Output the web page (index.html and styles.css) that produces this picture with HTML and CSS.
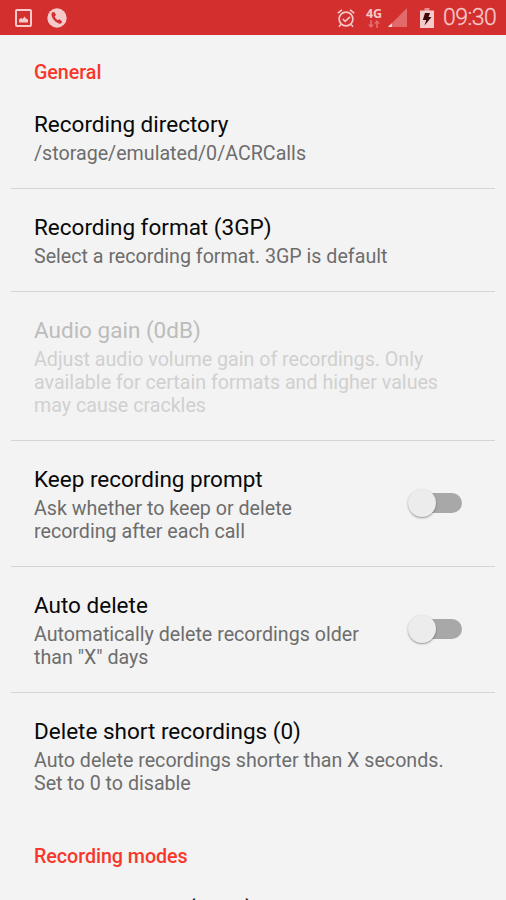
FILE: index.html
```html
<!DOCTYPE html>
<html lang="en"><head><meta charset="utf-8"><title>Settings</title><link rel="stylesheet" href="styles.css"></head>
<body>
<header class="status">
<svg class="ico image" width="17" height="18" viewBox="0 0 17 18"><rect x="1" y="1" width="15" height="16" rx="1" fill="none" stroke="currentColor" stroke-width="2"/><path d="M4 13.500V10.500l2-1.500 1.500 1 2-2.500 1.500 2 2 1v3z" fill="currentColor"/></svg>
<svg class="ico call" width="20" height="20" viewBox="0 0 20 20"><circle cx="10" cy="10" r="9.700" fill="currentColor"/><path d="M5.500 4.300L7.300 4l1.700 3.100-1.400 1.300q1 2.500 3.200 3.900l1.600-1 2.700 2.200-.700 1.700q-1 .8-2.500.3C8 14 5 10.500 4.400 6.500q0-1.500 1.100-2.200z" fill="#d32f2f"/></svg>
<span class="space"></span>
<svg class="ico alarm" width="18" height="20" viewBox="0 0 18 20"><circle cx="9" cy="11" r="6.900" fill="none" stroke="currentColor" stroke-width="1.700"/><path d="M.8 5.200L5 1.800M17.200 5.200L13 1.800M3.800 16.500L2 18.700M14.200 16.500l1.800 2.200M5.800 11l2.400 2.400L13 8.800" fill="none" stroke="currentColor" stroke-width="1.600"/></svg>
<div class="network"><b>4G</b><svg width="12" height="8" viewBox="0 0 12 8"><path d="M2.200 0h1.600v4.500H6L3 8 0 4.500h2.200zM8.200 8h1.600V3.500H12L9 0 6 3.500h2.200z" fill="#e27070"/></svg></div>
<svg class="ico signal" width="19" height="19" viewBox="0 0 19 19"><path d="M19 0v19H0z" fill="#e16b6b"/><path d="M3.800 15.200V19H0z" fill="#fbe6e6"/></svg>
<svg class="ico battery" width="14" height="20" viewBox="0 0 14 20"><path d="M4.500 0h5v3h-5z" fill="#e58c8c"/><path d="M0 2.500h14V20H0z" fill="currentColor"/><path d="M5 5h5L8.500 9H11.500L4.500 17.500 6.200 12H2.800z" fill="#3a0808"/></svg>
<time>09:30</time>
</header>
<main>
<h2>General</h2>
<section class="first"><div class="copy"><h3>Recording directory</h3><p>/storage/emulated/0/ACRCalls</p></div></section>
<section><div class="copy"><h3>Recording format (3GP)</h3><p>Select a recording format. 3GP is default</p></div></section>
<section class="disabled"><div class="copy"><h3>Audio gain (0dB)</h3><p>Adjust audio volume gain of recordings. Only<br>available for certain formats and higher values<br>may cause crackles</p></div></section>
<section><div class="copy"><h3>Keep recording prompt</h3><p>Ask whether to keep or delete<br>recording after each call</p></div><div class="switch"></div></section>
<section><div class="copy"><h3>Auto delete</h3><p>Automatically delete recordings older<br>than "X" days</p></div><div class="switch"></div></section>
<section class="last"><div class="copy"><h3>Delete short recordings (0)</h3><p>Auto delete recordings shorter than X seconds.<br>Set to 0 to disable</p></div></section>
<h2 class="modes">Recording modes</h2>
<section class="first last"><div class="copy"><h3>Save recording (none)</h3></div></section>
</main>
</body></html>
```
FILE: styles.css
```css
* { box-sizing: border-box; }
html, body { height: 100%; overflow: hidden; }
body { display: flex; flex-direction: column; margin: 0; background: #f3f3f3; font-family: Roboto, sans-serif; color: #080808; }
.status { flex: none; display: flex; align-items: center; height: 35px; padding: 0 10px 0 15px; background: #d32f2f; color: #f5caca; }
.ico { flex: none; }
.call { margin-left: 15px; }
.space { flex: 1; }
.network { display: flex; flex-direction: column; align-items: center; width: 18px; margin: 0 5px 0 10px; font-family: "Open Sans", sans-serif; font-size: 12.5px; line-height: 12px; }
.battery { margin: 0 9px 0 13px; }
time { width: 53px; font-size: 23px; line-height: 37px; font-weight: 300; letter-spacing: -0.5px; white-space: nowrap; -webkit-text-stroke: 0.3px #f5caca; }
main { flex: 1; min-height: 0; overflow: hidden; padding: 0 11px; }
h2 { margin: 0; padding: 26px 23px 0; font-size: 19.7px; line-height: 24px; font-weight: 500; letter-spacing: -0.05px; color: #f8372b; }
.modes { padding-top: 27px; }
section { display: flex; justify-content: space-between; padding: 24px 33px 23px 23px; border-bottom: 1px solid #d4d4d4; }
.first { padding-top: 25px; }
h3 { margin: 0; font-size: 22.5px; line-height: 28px; font-weight: 400; white-space: nowrap; }
p { margin: 4px 0 0; font-size: 19.65px; line-height: 23px; color: #6d6d6d; white-space: nowrap; }
.disabled h3 { color: #bcbcbc; }
.disabled p { color: #d0d0d0; }
.switch { position: relative; width: 54px; height: 30px; margin-top: 23px; }
.switch::before { content: ""; position: absolute; left: 6px; top: 5px; width: 48px; height: 20px; border-radius: 10px; background: #a8a8a8; }
.switch::after { content: ""; position: absolute; left: 0; top: 1px; width: 28px; height: 28px; border-radius: 50%; background: #ececec; box-shadow: 0 1px 2px #0006; }
.last { border: 0; }
```
